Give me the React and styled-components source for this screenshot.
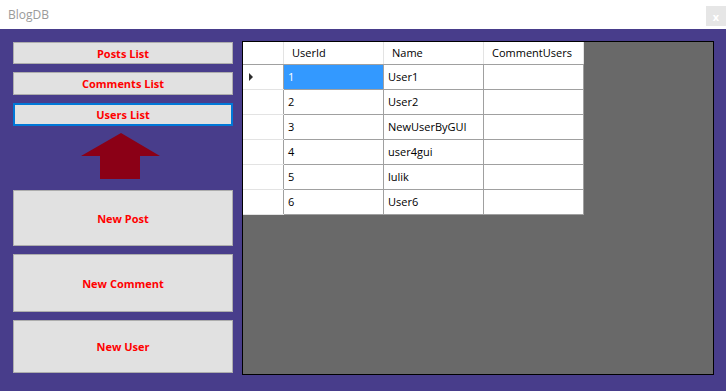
import React from 'react'
import styled, { createGlobalStyle } from 'styled-components'

const GlobalStyle = createGlobalStyle`
  html, body {
    margin: 0;
    padding: 0;
    background: #483d8b;
  }
  body {
    font-family: "Open Sans", "Noto Sans", sans-serif;
  }
`

const Window = styled.div`
  width: 726px;
  height: 391px;
  display: flex;
  flex-direction: column;
  overflow: hidden;
`

const TitleBar = styled.div`
  height: 29px;
  flex: none;
  background: #ffffff;
  display: flex;
  align-items: flex-start;
  justify-content: space-between;
`

const Title = styled.span`
  margin: 6px 0 0 8px;
  font-size: 12px;
  color: #9a9a9a;
`

const CloseBox = styled.div`
  width: 20px;
  height: 20px;
  margin-top: 6px;
  background: #e6e6e6;
  color: #ffffff;
  font-size: 11px;
  font-weight: bold;
  display: flex;
  align-items: center;
  justify-content: center;
`

const Main = styled.div`
  flex: 1;
  background: #483d8b;
  display: flex;
  gap: 9px;
  padding: 13px 12px 16px 13px;
`

const Side = styled.div`
  width: 220px;
  flex: none;
  display: flex;
  flex-direction: column;
`

const ActionButton = styled.button`
  box-sizing: border-box;
  width: 220px;
  height: ${p => p.$h}px;
  margin-top: ${p => p.$gap || 0}px;
  background: #e1e1e1;
  border: ${p => (p.$focused ? '2px solid #0078d7' : '1px solid #adadad')};
  color: #ff0000;
  font-family: "Open Sans", "Noto Sans", sans-serif;
  font-weight: 700;
  font-size: 11px;
  padding: 0;
  display: flex;
  align-items: center;
  justify-content: center;
`

const Arrow = styled.svg`
  display: block;
  margin: 7px 0 11px 68px;
`

const Panel = styled.div`
  flex: 1;
  margin-top: -1px;
  background: #696969;
  border: 1px solid #000000;
`

const Grid = styled.table`
  border-collapse: collapse;
  background: #ffffff;
  font-size: 11px;
  color: #000000;
`

const HeadCell = styled.th`
  box-sizing: border-box;
  width: ${p => p.$w}px;
  height: 22px;
  padding: 0 0 0 8px;
  text-align: left;
  font-weight: 400;
  border-right: 1px solid #e3e3e3;
  border-bottom: 1px solid #a0a0a0;
`

const RowHead = styled.td`
  width: 40px;
  height: 24px;
  padding: 0;
  border-right: 1px solid #a0a0a0;
  border-bottom: 1px solid #e3e3e3;
  position: relative;
`

const Pointer = styled.span`
  position: absolute;
  left: 6px;
  top: 8px;
  width: 0;
  height: 0;
  border-top: 4px solid transparent;
  border-bottom: 4px solid transparent;
  border-left: 4px solid #2c2c2c;
`

const Cell = styled.td`
  height: 24px;
  padding: 0 0 0 4px;
  border-right: 1px solid #a0a0a0;
  border-bottom: 1px solid #a0a0a0;
  background: ${p => (p.$selected ? '#3399ff' : '#ffffff')};
  color: ${p => (p.$selected ? '#ffffff' : '#000000')};
`

const users = [
  { id: 1, name: 'User1' },
  { id: 2, name: 'User2' },
  { id: 3, name: 'NewUserByGUI' },
  { id: 4, name: 'user4gui' },
  { id: 5, name: 'lulik' },
  { id: 6, name: 'User6' },
]

const App = () => {
  return (
    <Window>
      <GlobalStyle />
      <TitleBar>
        <Title>BlogDB</Title>
        <CloseBox>x</CloseBox>
      </TitleBar>
      <Main>
        <Side>
          <ActionButton $h={22}>Posts List</ActionButton>
          <ActionButton $h={23} $gap={8}>Comments List</ActionButton>
          <ActionButton $h={23} $gap={8} $focused>Users List</ActionButton>
          <Arrow width="80" height="46" viewBox="0 0 80 46">
            <polygon points="40,0 79,23 59,23 59,46 19,46 19,23 0,23" fill="#8b0016" />
          </Arrow>
          <ActionButton $h={56}>New Post</ActionButton>
          <ActionButton $h={58} $gap={8}>New Comment</ActionButton>
          <ActionButton $h={53} $gap={8}>New User</ActionButton>
        </Side>
        <Panel>
          <Grid>
            <thead>
              <tr>
                <HeadCell $w={40} />
                <HeadCell $w={100}>UserId</HeadCell>
                <HeadCell $w={100}>Name</HeadCell>
                <HeadCell $w={100}>CommentUsers</HeadCell>
              </tr>
            </thead>
            <tbody>
              {users.map((u, i) => (
                <tr key={u.id}>
                  <RowHead>{i === 0 && <Pointer />}</RowHead>
                  <Cell $selected={i === 0}>{u.id}</Cell>
                  <Cell>{u.name}</Cell>
                  <Cell />
                </tr>
              ))}
            </tbody>
          </Grid>
        </Panel>
      </Main>
    </Window>
  )
}

export default App
